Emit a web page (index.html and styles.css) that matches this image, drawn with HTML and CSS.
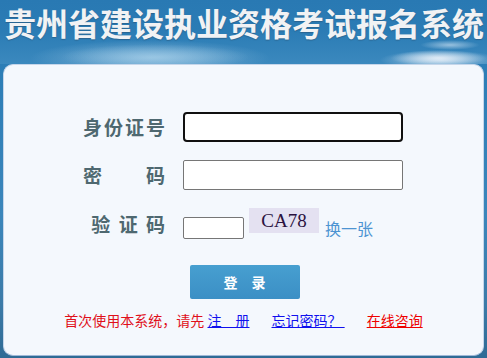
FILE: index.html
```html
<!DOCTYPE html>
<html lang="zh">
<head>
<meta charset="utf-8">
<title>贵州省建设执业资格考试报名系统</title>
<link rel="stylesheet" href="styles.css">
</head>
<body>
<header class="banner">
  <h1 class="title">贵州省建设执业资格考试报名系统</h1>
  <span class="cloud cloud-a"></span>
  <span class="cloud cloud-b"></span>
  <span class="cloud cloud-c"></span>
</header>
<main class="panel">
  <form class="login">
    <div class="row">
      <label class="label">身份证号</label>
      <input class="field field-focus" type="text">
    </div>
    <div class="row">
      <label class="label">密　　码</label>
      <input class="field" type="password">
    </div>
    <div class="row row-code">
      <label class="label">验 证 码</label>
      <input class="field field-code" type="text">
      <span class="captcha">CA78</span>
      <a class="refresh">换一张</a>
    </div>
    <div class="actions">
      <button class="btn" type="button">登　录</button>
    </div>
    <p class="links">首次使用本系统，请先 <a class="blue">注　册</a><a class="blue gap">忘记密码？&nbsp;</a><a class="red gap">在线咨询</a></p>
  </form>
</main>
</body>
</html>
```
FILE: styles.css
```css
html, body {
  margin: 0;
  padding: 0;
}
body {
  width: 487px;
  height: 358px;
  overflow: hidden;
  font-family: "Noto Sans CJK SC", "Noto Sans", sans-serif;
  background: linear-gradient(180deg, #2a7ab3 0%, #2b7db6 15%, #3b86bb 60%, #3c7ba8 85%, #2f6b95 100%);
}
.banner {
  position: relative;
  height: 64px;
  box-sizing: border-box;
  padding: 6px 0 0 4px;
  background:
    radial-gradient(ellipse 120px 18px at 150px 58px, rgba(190,220,240,0.55), rgba(190,220,240,0) 100%),
    radial-gradient(ellipse 60px 10px at 440px 60px, rgba(230,240,250,0.7), rgba(230,240,250,0) 100%),
    linear-gradient(180deg, #2979b3 0%, #2b7cb5 50%, #3b89be 100%);
  overflow: hidden;
}
.title {
  position: relative;
  z-index: 2;
  margin: 0;
  font-size: 32px;
  line-height: 32px;
  font-weight: 700;
  color: #f1f2f4;
  white-space: nowrap;
  text-shadow: 0 1px 1px rgba(40, 70, 100, 0.45);
}
.cloud {
  position: absolute;
  border-radius: 50%;
  z-index: 1;
}
.cloud-a {
  left: 60px; top: 44px; width: 190px; height: 26px;
  background: radial-gradient(ellipse at center, rgba(170,210,235,0.6), rgba(170,210,235,0) 70%);
}
.cloud-b {
  left: 390px; top: 50px; width: 97px; height: 16px;
  background: radial-gradient(ellipse at center, rgba(235,242,250,0.85), rgba(235,242,250,0) 70%);
}
.cloud-c {
  left: 420px; top: 40px; width: 60px; height: 10px;
  background: radial-gradient(ellipse at center, rgba(220,235,248,0.6), rgba(220,235,248,0) 70%);
}
.panel {
  margin: 0 3px;
  height: 292px;
  box-sizing: border-box;
  background: #f4f8fd;
  border: 1px solid #c6d6ea;
  border-bottom-color: #9fb9d8;
  border-radius: 10px;
}
.login {
  margin: 0;
  padding-top: 47px;
  display: flex;
  flex-direction: column;
}
.row {
  display: flex;
  align-items: center;
  height: 30px;
  margin-bottom: 18px;
}
.label {
  width: 163px;
  flex: none;
  text-align: right;
  font-size: 19px;
  font-weight: 700;
  letter-spacing: 2px;
  color: #4e6870;
  margin-right: 16px;
  line-height: 24px;
}
.field {
  box-sizing: border-box;
  width: 220px;
  height: 30px;
  margin: 0;
  padding: 0 4px;
  background: #fff;
  border: 1px solid #767676;
  border-radius: 2px;
  font-size: 14px;
}
.field-focus {
  border: 2px solid #101010;
  border-radius: 4px;
}
.row-code {
  align-items: flex-start;
  height: 31px;
  margin-bottom: 26px;
}
.row-code .label {
  margin-top: 4px;
}
.field-code {
  width: 61px;
  height: 22px;
  margin-top: 9px;
}
.captcha {
  box-sizing: border-box;
  width: 70px;
  height: 25px;
  margin-left: 5px;
  background: #e4e1f1;
  font-family: "Liberation Serif", "DejaVu Serif", serif;
  font-size: 19px;
  line-height: 25px;
  text-align: center;
  color: #2b123f;
}
.refresh {
  margin-left: 6px;
  margin-top: 9px;
  font-size: 16px;
  line-height: 22px;
  color: #4d94d2;
}
.actions {
  display: flex;
  justify-content: center;
  padding-left: 2px;
}
.btn {
  width: 110px;
  height: 34px;
  border: none;
  border-radius: 2px;
  background: linear-gradient(180deg, #479fd0 0%, #3b8fc5 100%);
  color: #fff;
  font-family: "Noto Sans CJK SC", sans-serif;
  font-size: 14px;
  font-weight: 700;
  padding: 0;
}
.links {
  margin: 11px 0 0 0;
  text-align: center;
  font-size: 14px;
  line-height: 20px;
  color: #e0101a;
  white-space: nowrap;
}
.links a {
  text-decoration: underline;
}
.blue {
  color: #1010ee;
}
.red {
  color: #ee0000;
}
.gap {
  margin-left: 22px;
}
```
